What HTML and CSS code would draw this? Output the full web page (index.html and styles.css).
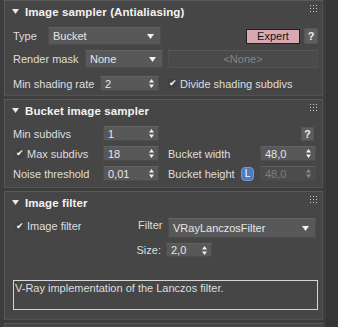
FILE: index.html
```html
<!DOCTYPE html>
<html lang="en">
<head>
    <meta charset="UTF-8">
    <meta name="viewport" content="width=device-width, initial-scale=1.0">
    <link rel="stylesheet" href="styles.css">
    <title>Render settings</title>
</head>
<body>
    <div class="panels">

        <!-- 01 • Image sampler -->
        <section class="rollout sampler">
            <header class="rollout__head">
                <svg class="tri" width="7" height="5" viewBox="0 0 7 5"><path d="M0 0H7L3.5 5Z" fill="#e8e8e8"/></svg>
                <span class="rollout__title">Image sampler (Antialiasing)</span>
                <svg class="grip" width="7" height="7" viewBox="0 0 7 7" fill="#c8c8c8"><rect x="0" y="0" width="1" height="1"/><rect x="3" y="0" width="1" height="1"/><rect x="6" y="0" width="1" height="1"/><rect x="0" y="3" width="1" height="1"/><rect x="3" y="3" width="1" height="1"/><rect x="6" y="3" width="1" height="1"/><rect x="0" y="6" width="1" height="1"/><rect x="3" y="6" width="1" height="1"/><rect x="6" y="6" width="1" height="1"/></svg>
            </header>
            <div class="rollout__body">
                <div class="row row--type">
                    <span class="lbl">Type</span>
                    <div class="select select--type">Bucket<svg class="drop" width="7" height="5" viewBox="0 0 7 5"><path d="M0 0H7L3.5 5Z" fill="#f0f0f0"/></svg></div>
                    <button class="expert">Expert</button>
                    <button class="help">?</button>
                </div>
                <div class="row row--mask">
                    <span class="lbl">Render mask</span>
                    <div class="select select--mask">None<svg class="drop" width="7" height="5" viewBox="0 0 7 5"><path d="M0 0H7L3.5 5Z" fill="#f0f0f0"/></svg></div>
                    <div class="select select--off">&lt;None&gt;</div>
                </div>
                <div class="row row--rate">
                    <span class="lbl">Min shading rate</span>
                    <div class="spin spin--rate">2<svg class="arrows" width="5" height="9" viewBox="0 0 5 9"><path d="M0 3.5H5L2.5 0Z M0 5.5H5L2.5 9Z" fill="#f0f0f0"/></svg></div>
                    <label class="check"><span class="box">&#10004;</span>Divide shading subdivs</label>
                </div>
            </div>
        </section>

        <!-- 02 • Bucket image sampler -->
        <section class="rollout bucket">
            <header class="rollout__head">
                <svg class="tri" width="7" height="5" viewBox="0 0 7 5"><path d="M0 0H7L3.5 5Z" fill="#e8e8e8"/></svg>
                <span class="rollout__title">Bucket image sampler</span>
                <svg class="grip" width="7" height="7" viewBox="0 0 7 7" fill="#c8c8c8"><rect x="0" y="0" width="1" height="1"/><rect x="3" y="0" width="1" height="1"/><rect x="6" y="0" width="1" height="1"/><rect x="0" y="3" width="1" height="1"/><rect x="3" y="3" width="1" height="1"/><rect x="6" y="3" width="1" height="1"/><rect x="0" y="6" width="1" height="1"/><rect x="3" y="6" width="1" height="1"/><rect x="6" y="6" width="1" height="1"/></svg>
            </header>
            <div class="rollout__body grid">
                <span class="lbl">Min subdivs</span>
                <div class="spin">1<svg class="arrows" width="5" height="9" viewBox="0 0 5 9"><path d="M0 3.5H5L2.5 0Z M0 5.5H5L2.5 9Z" fill="#f0f0f0"/></svg></div>
                <span></span><span></span><span></span>
                <button class="help help--small">?</button>

                <label class="check check--lead"><span class="box">&#10004;</span>Max subdivs</label>
                <div class="spin">18<svg class="arrows" width="5" height="9" viewBox="0 0 5 9"><path d="M0 3.5H5L2.5 0Z M0 5.5H5L2.5 9Z" fill="#f0f0f0"/></svg></div>
                <span></span>
                <span class="lbl">Bucket width</span>
                <span></span>
                <div class="spin">48,0<svg class="arrows" width="5" height="9" viewBox="0 0 5 9"><path d="M0 3.5H5L2.5 0Z M0 5.5H5L2.5 9Z" fill="#f0f0f0"/></svg></div>

                <span class="lbl">Noise threshold</span>
                <div class="spin">0,01<svg class="arrows" width="5" height="9" viewBox="0 0 5 9"><path d="M0 3.5H5L2.5 0Z M0 5.5H5L2.5 9Z" fill="#f0f0f0"/></svg></div>
                <span></span>
                <span class="lbl">Bucket height</span>
                <span class="lock">L</span>
                <div class="spin spin--off">48,0<svg class="arrows" width="5" height="9" viewBox="0 0 5 9"><path d="M0 3.5H5L2.5 0Z M0 5.5H5L2.5 9Z" fill="#8a8a8a"/></svg></div>
            </div>
        </section>

        <!-- 03 • Image filter -->
        <section class="rollout filter">
            <header class="rollout__head">
                <svg class="tri" width="7" height="5" viewBox="0 0 7 5"><path d="M0 0H7L3.5 5Z" fill="#e8e8e8"/></svg>
                <span class="rollout__title">Image filter</span>
                <svg class="grip" width="7" height="7" viewBox="0 0 7 7" fill="#c8c8c8"><rect x="0" y="0" width="1" height="1"/><rect x="3" y="0" width="1" height="1"/><rect x="6" y="0" width="1" height="1"/><rect x="0" y="3" width="1" height="1"/><rect x="3" y="3" width="1" height="1"/><rect x="6" y="3" width="1" height="1"/><rect x="0" y="6" width="1" height="1"/><rect x="3" y="6" width="1" height="1"/><rect x="6" y="6" width="1" height="1"/></svg>
            </header>
            <div class="rollout__body">
                <div class="row row--filter">
                    <label class="check check--lead check--filter"><span class="box">&#10004;</span>Image filter</label>
                    <span class="lbl lbl--filter">Filter</span>
                    <div class="select select--filter">VRayLanczosFilter<svg class="drop" width="7" height="5" viewBox="0 0 7 5"><path d="M0 0H7L3.5 5Z" fill="#f0f0f0"/></svg></div>
                </div>
                <div class="row row--size">
                    <span class="lbl lbl--size">Size:</span>
                    <div class="spin spin--size">2,0<svg class="arrows" width="5" height="9" viewBox="0 0 5 9"><path d="M0 3.5H5L2.5 0Z M0 5.5H5L2.5 9Z" fill="#f0f0f0"/></svg></div>
                </div>
                <div class="note">V-Ray implementation of the Lanczos filter.</div>
            </div>
        </section>

        <!-- 04 • Global DMC (cut off) -->
        <section class="rollout dmc">
            <header class="rollout__head">
                <svg class="tri" width="7" height="5" viewBox="0 0 7 5"><path d="M0 0H7L3.5 5Z" fill="#e8e8e8"/></svg>
                <span class="rollout__title">Global DMC</span>
            </header>
        </section>
    </div>
    <div class="scrollstrip"></div>
</body>
</html>
```

FILE: styles.css
```css
*{box-sizing: border-box; margin: 0; padding: 0;}

body{display: flex; height: 327px; overflow: hidden; background: #3d3d3d; font-family: "Liberation Sans", Arial, sans-serif; font-size: 11px; color: #dedede;}

.panels{width: 323px; padding-left: 4px; display: flex; flex-direction: column; gap: 3px;}
.scrollstrip{flex: 1; margin-left: 3px; background: #373737; border-left: 1px solid #333;}

/* rollouts */
.rollout{background: #464646; border: 1px solid #5a5a5a; border-right-color: #525252; border-bottom-color: #525252;}
.rollout__head{height: 21px; display: flex; align-items: center; padding: 0 5px 0 7px;}
.rollout__head .tri{margin-right: 6px;}
.rollout__title{flex: 1; font-weight: bold; font-size: 11.5px; color: #f2f2f2; letter-spacing: 0.1px;}
.grip{margin-top: -6px;}

.rollout__body{padding: 5px 4px 0 8px;}

.row{display: flex; align-items: center;}
.lbl{white-space: nowrap;}

/* controls */
.select, .spin{position: relative; background: #585858; border: 1px solid #4c4c4c; border-top-color: #626262; padding-left: 4px; display: flex; align-items: center; color: #e6e6e6;}
.drop{position: absolute; right: 6px; top: 50%; margin-top: -2px;}
.arrows{position: absolute; right: 4px; top: 50%; margin-top: -4.5px;}

.select--off{background: #4a4a4a; border-color: #515151; border-top-color: #585858; color: #858585; justify-content: center; padding-left: 0;}
.spin--off{background: #4c4c4c; color: #7e7e7e;}

button{font-family: inherit; font-size: 11px; cursor: pointer;}
.expert{margin-left: auto; width: 54px; height: 15px; background: #d8a9b1; border: 1px solid #1e1e1e; color: #151515; line-height: 13px;}
.help{margin-left: 4px; width: 14px; height: 16px; background: #5e5e5e; border: 1px solid #555; color: #eee; font-weight: bold; line-height: 14px;}
.help--small{margin-left: 0; width: 13px; height: 14px; justify-self: end; margin-right: 2px; line-height: 12px; font-size: 10.5px;}

.check{display: flex; align-items: center; white-space: nowrap;}
.box{width: 9px; height: 9px; margin-right: 3px; background: #414141; color: #f4f4f4; font-size: 9px; line-height: 9px; display: flex; align-items: center; justify-content: center;}
.check--lead{margin-left: 2px;}

/* 01 */
.row--type{height: 18px;}
.row--type .lbl{width: 35px;}
.select--type{width: 113px; height: 18px;}

.row--mask{height: 18px; margin-top: 5px;}
.row--mask .lbl{width: 72px;}
.select--mask{width: 78px; height: 18px;}
.select--off{flex: 1; height: 18px; margin-left: 5px;}

.row--rate{height: 15px; margin-top: 8px;}
.row--rate .lbl{width: 87px;}
.spin--rate{width: 59px; height: 15px; margin-right: 9px;}
.sampler{padding-bottom: 4px;}

/* 02 */
.grid{display: grid; grid-template-columns: 90px 56px 9px 73px 19px 56px; grid-auto-rows: 15px; row-gap: 5px; align-items: center;}
.grid .spin{height: 15px;}
.lock{width: 13px; height: 14px; border-radius: 4px; background: #4d7cc4; border: 1px solid #6f9ad8; color: #fff; font-size: 10px; display: flex; align-items: center; justify-content: center;}
.bucket{padding-bottom: 6px;}

/* 03 */
.row--filter{height: 20px;}
.check--filter{width: 123px; align-self: flex-start; margin-top: 2px;}
.lbl--filter{width: 30px; align-self: flex-start; margin-top: 1px;}
.select--filter{flex: 1; height: 20px; margin-right: 2px;}

.row--size{height: 14px; margin-top: 5px;}
.lbl--size{width: 153px; text-align: right; padding-right: 5px;}
.spin--size{width: 46px; height: 14px;}

.note{margin-top: 23px; height: 30px; border: 1px solid #d6d6d6; padding: 1px 1px; white-space: nowrap;}
.filter{padding-bottom: 9px;}

.dmc{flex: 1;}
```
